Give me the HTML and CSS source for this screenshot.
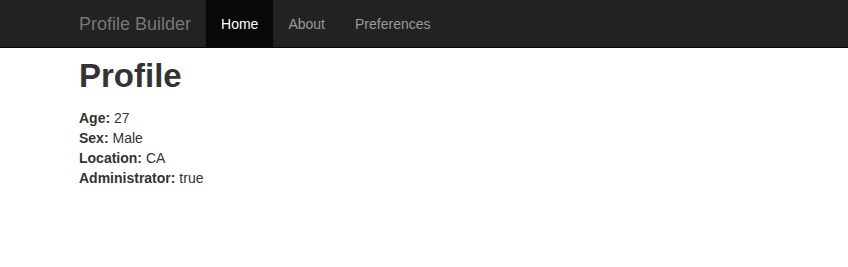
FILE: index.html
```html
<!DOCTYPE html>
<html lang="en">
<head>
  <meta charset="UTF-8">
  <meta name="viewport" content="width=device-width, initial-scale=1.0">
  <title>Profile Builder</title>
  <link rel="stylesheet" href="styles.css">
</head>
<body>
  <div class="navbar">
    <div class="container nav-inner">
      <a class="brand" href="#">Profile Builder</a>
      <ul class="nav">
        <li class="active"><a href="#">Home</a></li>
        <li><a href="#">About</a></li>
        <li><a href="#">Preferences</a></li>
      </ul>
    </div>
  </div>
  <div class="container content">
    <h1>Profile</h1>
    <div class="field"><b>Age:</b> 27</div>
    <div class="field"><b>Sex:</b> Male</div>
    <div class="field"><b>Location:</b> CA</div>
    <div class="field"><b>Administrator:</b> true</div>
  </div>
</body>
</html>
```

FILE: styles.css
```css
body {
  margin: 0;
  font-family: "Liberation Sans", Arial, sans-serif;
  font-size: 14px;
  line-height: 20px;
  color: #333;
  background: #fff;
}
.container {
  padding-left: 64px;
}
.navbar {
  background-color: #222;
  border-bottom: 1px solid #080808;
  height: 47px;
}
.nav-inner {
  display: flex;
  height: 47px;
}
.brand {
  padding: 1px 15px 0;
  font-size: 18px;
  line-height: 46px;
  color: #777;
  text-decoration: none;
}
.nav {
  display: flex;
  list-style: none;
  margin: 0;
  padding: 0;
}
.nav li a {
  display: block;
  padding: 1px 15px 0;
  line-height: 46px;
  color: #999;
  text-decoration: none;
}
.nav li.active a {
  background-color: #080808;
  color: #fff;
}
.content {
  padding-left: 79px;
}
.content h1 {
  font-size: 33px;
  line-height: 36px;
  font-weight: bold;
  margin: 10px 0 14px;
}
.field b {
  font-weight: bold;
}
```
